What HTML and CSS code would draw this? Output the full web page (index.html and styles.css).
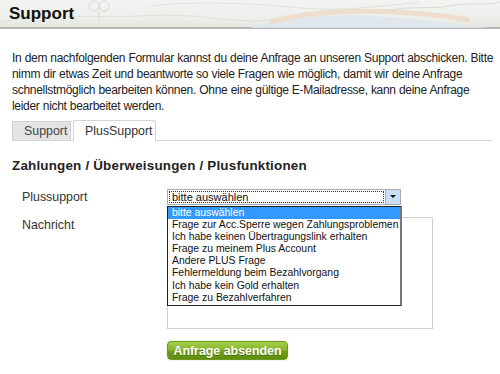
FILE: index.html
```html
<!DOCTYPE html>
<html lang="de">
<head>
  <meta charset="UTF-8" />
  <title>Support</title>
  <link rel="stylesheet" href="styles.css">
</head>
<body>

  <div class="header">
    <svg class="header-art" width="500" height="28" viewBox="0 0 500 28">
      <path d="M250 28 C290 14 360 12 420 20 C450 24 470 26 490 28 Z" fill="#dfe6ee" opacity="0.8"/>
      <path d="M270 22 C320 8 400 8 470 20" stroke="#efd9c6" stroke-width="5" fill="none" opacity="0.8"/>
      <path d="M0 22 C40 14 90 18 140 16 C200 12 230 24 270 20" stroke="#dde3d8" stroke-width="1" fill="none"/>
      <path d="M150 6 C200 0 260 4 300 8 C340 12 380 6 420 2" stroke="#dfe4dc" stroke-width="1" fill="none"/>
      <circle cx="94" cy="6" r="5" stroke="#d6dcd2" fill="none"/>
      <circle cx="104" cy="6" r="5" stroke="#d6dcd2" fill="none"/>
      <path d="M99 11 L99 20" stroke="#d6dcd2"/>
      <path d="M380 14 C400 4 430 10 450 6 C470 2 485 6 500 2" stroke="#d8ddd5" fill="none"/>
    </svg>
    <h1>Support</h1>
  </div>

  <div class="content">
    <p class="intro">In dem nachfolgenden Formular kannst du deine Anfrage an unseren Support abschicken. Bitte nimm dir etwas Zeit und beantworte so viele Fragen wie möglich, damit wir deine Anfrage schnellstmöglich bearbeiten können. Ohne eine gültige E-Mailadresse, kann deine Anfrage leider nicht bearbeitet werden.</p>

    <div class="tabs">
      <div class="tab">Support</div>
      <div class="tab active">PlusSupport</div>
    </div>

    <h2>Zahlungen / Überweisungen / Plusfunktionen</h2>

    <form class="form">
      <div class="row">
        <label>Plussupport</label>
        <div class="select-wrap">
          <div class="select">
            <span class="select-value">bitte auswählen</span>
            <span class="select-arrow"></span>
          </div>
          <ul class="dropdown">
            <li class="selected">bitte auswählen</li>
            <li>Frage zur Acc.Sperre wegen Zahlungsproblemen</li>
            <li>Ich habe keinen Übertragungslink erhalten</li>
            <li>Frage zu meinem Plus Account</li>
            <li>Andere PLUS Frage</li>
            <li>Fehlermeldung beim Bezahlvorgang</li>
            <li>Ich habe kein Gold erhalten</li>
            <li>Frage zu Bezahlverfahren</li>
          </ul>
        </div>
      </div>
      <div class="row">
        <label>Nachricht</label>
        <textarea class="message"></textarea>
      </div>
      <div class="row">
        <span></span>
        <button type="button" class="btn">Anfrage absenden</button>
      </div>
    </form>
  </div>

</body>
</html>
```

FILE: styles.css
```css
* { margin: 0; padding: 0; box-sizing: border-box; }
body {
  font-family: 'Liberation Sans', Arial, sans-serif;
  font-size: 12px;
  color: #222;
  background: white;
  width: 500px;
  height: 374px;
  overflow: hidden;
}
.header {
  position: relative;
  height: 29px;
  background: linear-gradient(180deg, #f3f4f1 0%, #eef0ec 60%, #e4e8df 100%);
  border-bottom: 2px solid #b4b4b4;
  padding: 4px 9px 0;
}
.header-art {
  position: absolute;
  left: 0;
  top: 0;
}
.header h1 {
  position: relative;
  font-size: 17px;
  font-weight: bold;
  color: #111;
  line-height: 20px;
}
.content {
  padding: 21px 4px 0 12px;
}
.intro {
  line-height: 16px;
  font-size: 12px;
  letter-spacing: -0.3px;
  word-spacing: 0.2px;
  color: #222;
}
.tabs {
  display: flex;
  align-items: flex-end;
  gap: 2px;
  margin-top: 7px;
  border-bottom: 1px solid #d4d4d4;
  height: 20px;
  margin-right: 4px;
}
.tab {
  height: 19px;
  padding: 2px 11px 0;
  background: #e4e4e4;
  border: 1px solid #cfcfcf;
  border-bottom: none;
  color: #444;
  font-size: 12.4px;
  width: 59px;
}
.tab.active {
  height: 21px;
  margin-bottom: -1px;
  background: white;
  border-color: #d4d4d4;
  border-top-right-radius: 4px;
  width: 83px;
  padding: 3px 9px 0 11px;
  color: #333;
}
h2 {
  font-size: 13.4px;
  font-weight: bold;
  color: #222;
  margin-top: 17px;
  letter-spacing: 0.2px;
}
.form {
  margin-top: 16px;
}
.row {
  display: grid;
  grid-template-columns: 145px auto;
  margin-left: 10px;
}
.row label {
  font-size: 12.4px;
  color: #333;
  padding-top: 1px;
}
.select-wrap {
  position: relative;
  width: 234px;
}
.select {
  height: 16px;
  border: 1px solid #a5acb5;
  display: flex;
  align-items: stretch;
  background: white;
}
.select-value {
  flex: 1;
  border: 1px dotted #333;
  margin: 1px;
  font-size: 11px;
  line-height: 10px;
  padding-left: 2px;
  color: #111;
}
.select-arrow {
  width: 15px;
  background: #c9dff5;
  border-left: 1px solid #8fb0d6;
  position: relative;
}
.select-arrow::after {
  content: "";
  position: absolute;
  left: 4px;
  top: 5px;
  border-left: 3px solid transparent;
  border-right: 3px solid transparent;
  border-top: 3px solid #111;
}
.dropdown {
  position: absolute;
  left: 0;
  top: 17px;
  width: 235px;
  list-style: none;
  background: white;
  border: 1px solid #222;
  border-right: 2px solid #777;
  z-index: 2;
  padding-bottom: 1px;
}
.dropdown li {
  font-size: 10.4px;
  line-height: 12.1px;
  padding-left: 4px;
  color: #111;
  white-space: nowrap;
}
.dropdown li.selected {
  background: #3399ff;
  color: white;
}
.message {
  width: 266px;
  height: 112px;
  border: 1px solid #cfcfcf;
  resize: none;
  margin-top: 12px;
}
.row:nth-child(2) label {
  padding-top: 13px;
}
.btn {
  margin-top: 12px;
  width: 121px;
  height: 19px;
  border: 1px solid #6e9a1a;
  border-radius: 4px;
  background: linear-gradient(180deg, #a6cf4c 0%, #86b52a 45%, #6f9d18 55%, #5f8d10 100%);
  color: white;
  font-family: 'Liberation Sans', Arial, sans-serif;
  font-weight: bold;
  font-size: 12.4px;
  text-shadow: 0 1px 0 #4a6e0c;
  box-shadow: 0 0 2px #cfd9bd;
  cursor: pointer;
}
```
